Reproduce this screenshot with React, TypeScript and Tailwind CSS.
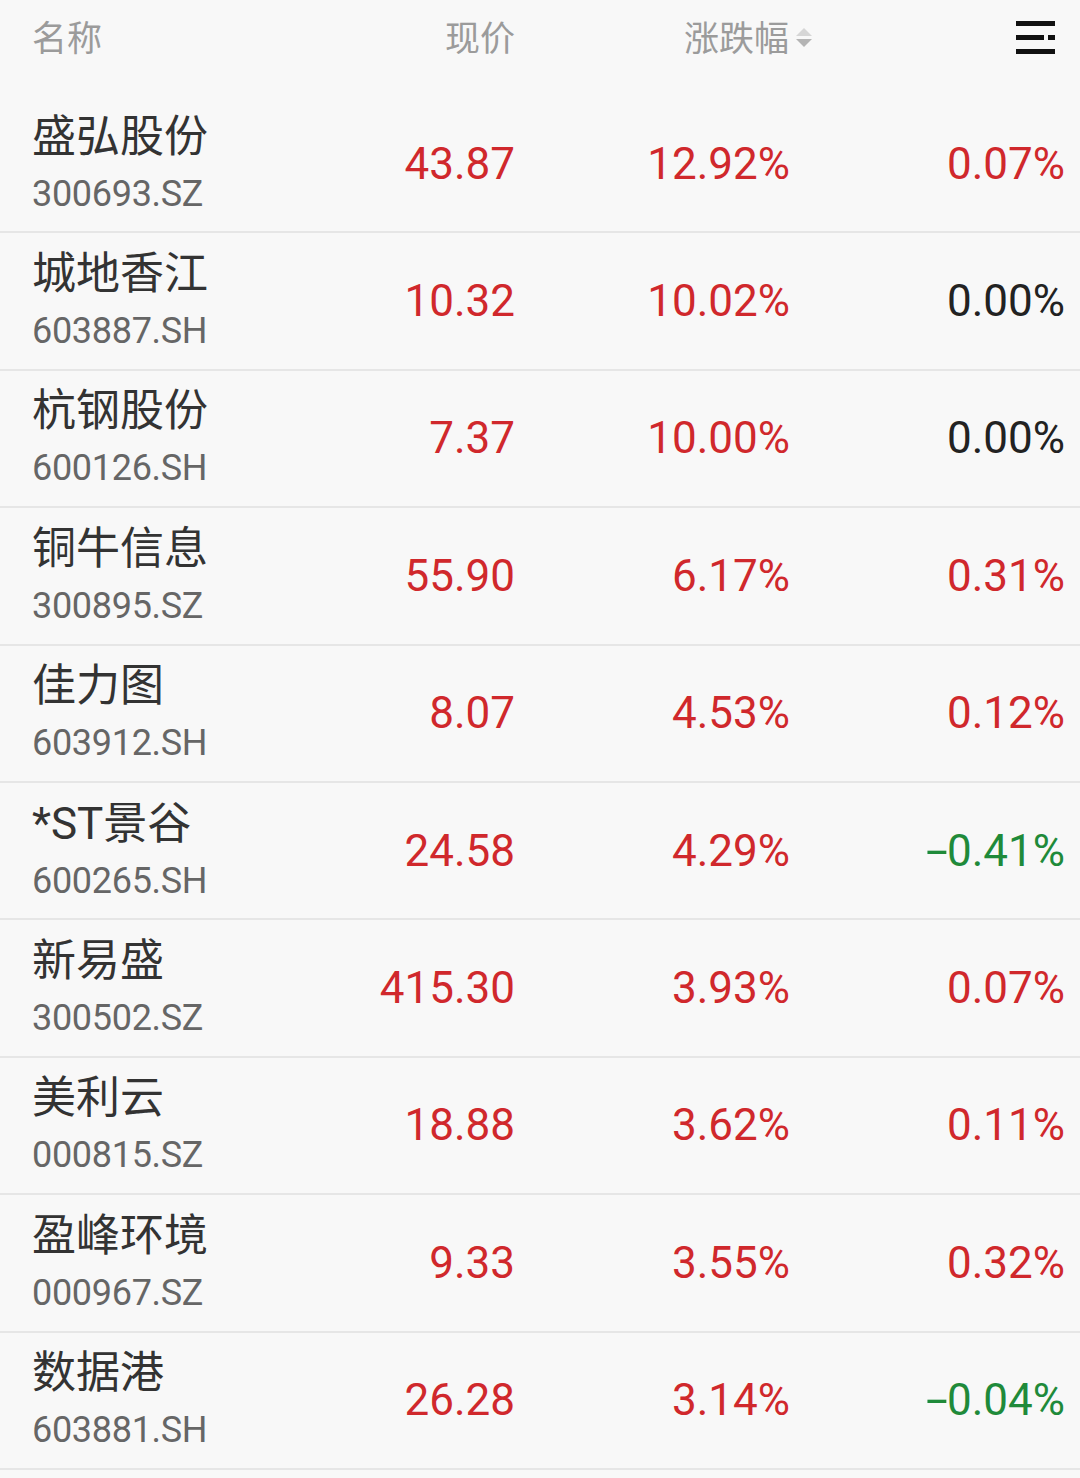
import React from "react";

type Row = { name: string; code: string; price: string; chg: string; last: string };

const rows: Row[] = [
  { name: "盛弘股份", code: "300693.SZ", price: "43.87", chg: "12.92%", last: "0.07%" },
  { name: "城地香江", code: "603887.SH", price: "10.32", chg: "10.02%", last: "0.00%" },
  { name: "杭钢股份", code: "600126.SH", price: "7.37", chg: "10.00%", last: "0.00%" },
  { name: "铜牛信息", code: "300895.SZ", price: "55.90", chg: "6.17%", last: "0.31%" },
  { name: "佳力图", code: "603912.SH", price: "8.07", chg: "4.53%", last: "0.12%" },
  { name: "*ST景谷", code: "600265.SH", price: "24.58", chg: "4.29%", last: "-0.41%" },
  { name: "新易盛", code: "300502.SZ", price: "415.30", chg: "3.93%", last: "0.07%" },
  { name: "美利云", code: "000815.SZ", price: "18.88", chg: "3.62%", last: "0.11%" },
  { name: "盈峰环境", code: "000967.SZ", price: "9.33", chg: "3.55%", last: "0.32%" },
  { name: "数据港", code: "603881.SH", price: "26.28", chg: "3.14%", last: "-0.04%" },
];

const lastColor = (v: string) =>
  v.startsWith("-") ? "text-[#1f8a3a]" : v === "0.00%" ? "text-[#222222]" : "text-[#d0282c]";

function Num({ v }: { v: string }) {
  if (v.startsWith("-")) {
    return (
      <>
        <span className="inline-block w-[20px] scale-x-[1.8] text-center">-</span>
        {v.slice(1)}
      </>
    );
  }
  return <>{v}</>;
}

export default function App() {
  return (
    <div className="w-[1080px] min-h-[1478px] bg-[#f8f8f8] font-['Roboto','Noto_Sans_CJK_SC',sans-serif]">
      {/* header */}
      <div className="grid h-[96px] grid-cols-[1fr_275px_275px_275px] pl-[32px] pr-[15px] pt-[12px] text-[35px] leading-[48px] text-[#9b9b9b]">
        <div className="font-['Noto_Sans_CJK_SC',sans-serif]">名称</div>
        <div className="text-right font-['Noto_Sans_CJK_SC',sans-serif]">现价</div>
        <div className="relative text-right font-['Noto_Sans_CJK_SC',sans-serif]">
          <span className="pr-[1px]">涨跌幅</span>
          <svg className="absolute left-[calc(100%+5px)] top-[14px]" width="18" height="24" viewBox="0 0 18 24">
            <path d="M1 10 L9 2 L17 10 Z" fill="#d6d6d6" />
            <path d="M1 13 L9 21 L17 13 Z" fill="#b4b4b4" />
          </svg>
        </div>
        <div className="flex justify-end pr-[10px] pt-[9px]">
          <div className="flex w-[39px] flex-col gap-[9px]">
            <div className="h-[5px] w-full bg-[#111111]" />
            <div className="flex h-[5px] w-full justify-between">
              <div className="h-[5px] w-[28px] bg-[#111111]" />
              <div className="h-[5px] w-[7px] bg-[#111111]" />
            </div>
            <div className="h-[5px] w-full bg-[#111111]" />
          </div>
        </div>
      </div>
      {/* rows */}
      {rows.map((r) => (
        <div
          key={r.code}
          className="grid h-[137.4px] grid-cols-[1fr_275px_275px_275px] items-center border-b-2 border-[#e6e6e6] pl-[32px] pr-[15px]"
        >
          <div className="flex flex-col pt-[3px]">
            <div className="text-[44px] leading-[50px] text-[#333333] font-['Roboto','Noto_Sans_CJK_SC',sans-serif]">{r.name}</div>
            <div className="mt-[7px] text-[36px] leading-[50px] tracking-[-0.3px] text-[#666666]">{r.code}</div>
          </div>
          <div className="text-right text-[44px] leading-[50px] text-[#d0282c]">{r.price}</div>
          <div className="text-right text-[44px] leading-[50px] text-[#d0282c]">{r.chg}</div>
          <div className={`text-right text-[44px] leading-[50px] ${lastColor(r.last)}`}>
            <Num v={r.last} />
          </div>
        </div>
      ))}
    </div>
  );
}
